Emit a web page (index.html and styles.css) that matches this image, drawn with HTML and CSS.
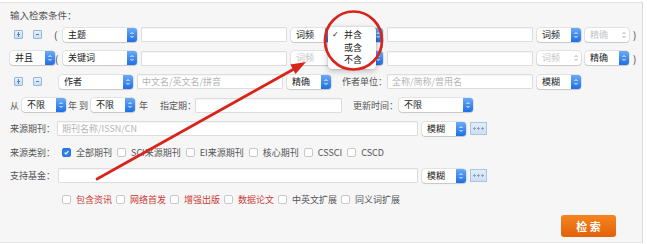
FILE: index.html
```html
<!DOCTYPE html>
<html lang="zh-CN">
<head>
    <meta charset="UTF-8">
    <title>高级检索</title>
    <link rel="stylesheet" href="styles.css">
</head>
<body>
<svg class="defs" width="0" height="0">
    <symbol id="ud" viewBox="0 0 6 10">
        <path d="M1.5 4 L3 2.5 L4.5 4 M1.5 6 L3 7.5 L4.5 6" fill="none" stroke="currentColor" stroke-width="1"/>
    </symbol>
    <symbol id="tick" viewBox="0 0 10 10">
        <path d="M2.3 5.2 L4.2 7.1 L7.8 2.9" fill="none" stroke="#fff" stroke-width="1.6"/>
    </symbol>
</svg>

<div id="search">
    <div class="title">输入检索条件：</div>

    <!-- 第一行条件 -->
    <div class="row">
        <div class="lead">
            <span class="ops"><span class="op add"></span><span class="op"></span></span>
            <span class="paren">(</span>
        </div>
        <span class="sel field"><span class="val">主题</span><span class="arr"><svg><use href="#ud"/></svg></span></span>
        <input class="txt" type="text">
        <span class="sel"><span class="val">词频</span><span class="arr"><svg><use href="#ud"/></svg></span></span>
        <span class="sel"><span class="val">并含</span><span class="arr"><svg><use href="#ud"/></svg></span></span>
        <input class="txt" type="text">
        <span class="sel"><span class="val">词频</span><span class="arr"><svg><use href="#ud"/></svg></span></span>
        <span class="sel off"><span class="val">精确</span><span class="arr"><svg><use href="#ud"/></svg></span></span>
        <span class="paren">)</span>
    </div>

    <!-- 第二行条件 -->
    <div class="row">
        <div class="lead">
            <span class="sel logic"><span class="val">并且</span><span class="arr"><svg><use href="#ud"/></svg></span></span>
            <span class="paren">(</span>
        </div>
        <span class="sel field"><span class="val">关键词</span><span class="arr"><svg><use href="#ud"/></svg></span></span>
        <input class="txt" type="text">
        <span class="sel off"><span class="val">词频</span><span class="arr"><svg><use href="#ud"/></svg></span></span>
        <span class="sel"><span class="val">并含</span><span class="arr"><svg><use href="#ud"/></svg></span></span>
        <input class="txt" type="text">
        <span class="sel off"><span class="val">词频</span><span class="arr"><svg><use href="#ud"/></svg></span></span>
        <span class="sel"><span class="val">精确</span><span class="arr"><svg><use href="#ud"/></svg></span></span>
        <span class="paren">)</span>
    </div>

    <!-- 作者 -->
    <div class="row">
        <div class="lead short">
            <span class="ops"><span class="op add"></span><span class="op"></span></span>
        </div>
        <span class="sel field"><span class="val">作者</span><span class="arr"><svg><use href="#ud"/></svg></span></span>
        <input class="txt" type="text" placeholder="中文名/英文名/拼音">
        <span class="sel"><span class="val">精确</span><span class="arr"><svg><use href="#ud"/></svg></span></span>
        <span class="lbl org">作者单位：</span>
        <input class="txt" type="text" placeholder="全称/简称/曾用名">
        <span class="sel"><span class="val">模糊</span><span class="arr"><svg><use href="#ud"/></svg></span></span>
    </div>

    <!-- 时间 -->
    <div class="row tight">
        <span class="lbl from">从</span>
        <span class="sel"><span class="val">不限</span><span class="arr"><svg><use href="#ud"/></svg></span></span>
        <span class="lbl yr">年 到</span>
        <span class="sel"><span class="val">不限</span><span class="arr"><svg><use href="#ud"/></svg></span></span>
        <span class="lbl yr2">年</span>
        <span class="lbl period">指定期：</span>
        <input class="txt date" type="text">
        <span class="lbl upd">更新时间：</span>
        <span class="sel field"><span class="val">不限</span><span class="arr"><svg><use href="#ud"/></svg></span></span>
    </div>

    <!-- 来源期刊 -->
    <div class="row">
        <span class="lbl src">来源期刊：</span>
        <input class="txt long" type="text" placeholder="期刊名称/ISSN/CN">
        <span class="sel"><span class="val">模糊</span><span class="arr"><svg><use href="#ud"/></svg></span></span>
        <span class="more"><i></i></span>
    </div>

    <!-- 来源类别 -->
    <div class="row">
        <span class="lbl kind">来源类别：</span>
        <label class="chk"><span class="cb on"><svg><use href="#tick"/></svg></span>全部期刊</label>
        <label class="chk"><span class="cb"></span>SCI来源期刊</label>
        <label class="chk"><span class="cb"></span>EI来源期刊</label>
        <label class="chk"><span class="cb"></span>核心期刊</label>
        <label class="chk"><span class="cb"></span>CSSCI</label>
        <label class="chk"><span class="cb"></span>CSCD</label>
    </div>

    <!-- 支持基金 -->
    <div class="row">
        <span class="lbl fund">支持基金：</span>
        <input class="txt long fund-in" type="text">
        <span class="sel"><span class="val">模糊</span><span class="arr"><svg><use href="#ud"/></svg></span></span>
        <span class="more"><i></i></span>
    </div>

    <div class="row extras">
        <label class="chk red"><span class="cb"></span>包含资讯</label>
        <label class="chk red"><span class="cb"></span>网络首发</label>
        <label class="chk red"><span class="cb"></span>增强出版</label>
        <label class="chk red"><span class="cb"></span>数据论文</label>
        <label class="chk"><span class="cb"></span>中英文扩展</label>
        <label class="chk"><span class="cb"></span>同义词扩展</label>
    </div>

    <div class="actions">
        <button class="btn-search" type="button">检 索</button>
    </div>

    <!-- 展开的下拉菜单 -->
    <ul class="menu">
        <li class="on">并含</li>
        <li>或含</li>
        <li>不含</li>
    </ul>
</div>

<!-- 标注 -->
<svg class="mark" width="647" height="244" viewBox="0 0 647 244">
    <ellipse cx="353.5" cy="40.5" rx="28.5" ry="29" fill="none" stroke="#d9241c" stroke-width="2.7"/>
    <line x1="97" y1="179" x2="294" y2="69" stroke="#d9241c" stroke-width="2.7" stroke-linecap="round"/>
    <polygon points="306,62 295.5,74 290.3,64.6" fill="#d9241c"/>
</svg>
</body>
</html>
```

FILE: styles.css
```css
* {
    box-sizing: border-box;
}
body, ul, li {
    margin: 0;
    padding: 0;
}
body {
    background: #fff;
    font-family: "Noto Sans CJK SC", "Noto Sans", sans-serif;
    font-size: 9px;
    color: #555;
    position: relative;
}
.defs {
    position: absolute;
}
#search {
    position: relative;
    margin-top: 2px;
    width: 643px;
    height: 241px;
    padding: 5px 0 0 10px;
    background: #f6f6f7;
    border-top: 1px solid #e3e3e5;
    border-right: 1px solid #dadadc;
    border-bottom: 1px solid #e6e6e8;
}
.title {
    line-height: 14px;
    margin-bottom: 1px;
    font-size: 9.5px;
}
.row {
    display: flex;
    align-items: center;
    gap: 4px;
    height: 23.5px;
}
.row.tight {
    gap: 2px;
}

/* 行首：加减按钮 / 逻辑关系 */
.lead {
    width: 49px;
    display: flex;
    align-items: center;
    justify-content: space-between;
}
.lead.short {
    width: 45px;
}
.ops {
    display: flex;
    gap: 10px;
    padding-left: 4px;
}
.op {
    position: relative;
    width: 9px;
    height: 9px;
    border: 1px solid #93b7de;
    border-radius: 1px;
    background: linear-gradient(#e8f1fa, #cbddf1);
}
.op::before {
    content: "";
    position: absolute;
    left: 2px;
    right: 2px;
    top: 3px;
    height: 1px;
    background: #4f83c0;
}
.op.add::after {
    content: "";
    position: absolute;
    top: 1px;
    bottom: 1px;
    left: 3px;
    width: 1px;
    background: #4f83c0;
}
.paren {
    font-size: 10px;
    color: #444;
    width: 5px;
}

/* 下拉框 */
.sel {
    display: flex;
    flex: none;
    width: 44px;
    height: 14px;
    background: #fff;
    border-radius: 3px;
    box-shadow: 0 0 0 0.5px rgba(0, 0, 0, .16), 0 1px 1px rgba(0, 0, 0, .12);
    color: #222;
}
.sel .val {
    flex: 1;
    padding-left: 5px;
    line-height: 14px;
}
.sel .arr {
    width: 10px;
    display: flex;
    align-items: center;
    justify-content: center;
    border-radius: 0 3px 3px 0;
    background: linear-gradient(#69abf7, #1f6ee5);
    color: #fff;
}
.sel .arr svg {
    width: 6px;
    height: 10px;
}
.sel.off {
    color: #c6c6c6;
}
.sel.off .arr {
    background: none;
    color: #a9a9a9;
}
.sel.field {
    width: 74px;
}
.sel.logic {
    width: 45px;
}

/* 输入框 */
.txt {
    flex: none;
    width: 146px;
    height: 15px;
    margin: 0;
    padding: 0 0 0 4px;
    background: #fff;
    border: 1px solid #dddddf;
    border-radius: 1px;
    box-shadow: inset 0 1px 1px rgba(0, 0, 0, .04);
    font-family: inherit;
    font-size: 9px;
    outline: none;
}
.txt::placeholder {
    color: #b4b4b4;
}
.txt.date {
    width: 147px;
}
.txt.long {
    width: 361px;
}
.txt.fund-in {
    width: 360px;
}

/* 文字标签 */
.lbl {
    flex: none;
    white-space: nowrap;
}
.org {
    width: 41px;
    margin-left: 7px;
}
.from {
    width: 10px;
}
.yr {
    width: 21px;
}
.yr2 {
    width: 21px;
    padding-left: 2px;
}
.period {
    width: 33px;
}
.upd {
    width: 44px;
    margin-left: 9px;
}
.src {
    width: 43px;
}
.kind {
    width: 48px;
}
.fund {
    width: 44px;
}

/* “…” 选择按钮 */
.more {
    display: flex;
    align-items: center;
    justify-content: center;
    width: 17px;
    height: 13px;
    border: 1px solid #aac5e3;
    background: linear-gradient(#e2edf8, #cddff2);
}
.more i {
    width: 11px;
    height: 3px;
    background: radial-gradient(circle at 1.5px 1.5px, #8aa4c2 1px, transparent 1.3px) 0 0 / 4px 3px repeat-x;
}

/* 复选框 */
.chk {
    display: flex;
    align-items: center;
    gap: 5px;
    margin-right: 1px;
    white-space: nowrap;
}
.cb {
    width: 9px;
    height: 9px;
    background: #fff;
    border: 1px solid #c8c8ca;
    border-radius: 2px;
}
.cb.on {
    background: #2f7fee;
    border-color: #2a6fd3;
}
.cb svg {
    display: block;
    width: 7px;
    height: 7px;
}
.extras {
    padding-left: 52px;
    gap: 4px;
}
.extras .chk {
    margin-right: 0;
}
.chk.red {
    color: #cc3a33;
}

.actions {
    display: flex;
    justify-content: flex-end;
    padding: 4px 26px 0 0;
}
.btn-search {
    width: 55px;
    height: 22px;
    border: none;
    border-radius: 3px;
    background: linear-gradient(#f5841f, #e2620a);
    color: #fff;
    font-family: inherit;
    font-size: 11px;
    font-weight: bold;
}

/* 下拉菜单 */
.menu {
    position: absolute;
    left: 328px;
    top: 24px;
    width: 48px;
    padding: 2px 0;
    background: #fff;
    border-radius: 4px;
    box-shadow: 0 2px 6px rgba(0, 0, 0, .25), 0 0 0 0.5px rgba(0, 0, 0, .1);
}
.menu li {
    list-style: none;
    position: relative;
    height: 12.5px;
    line-height: 12.5px;
    padding-left: 16px;
    color: #222;
}
.menu li.on::before {
    content: "✓";
    position: absolute;
    left: 4px;
    font-family: "DejaVu Sans", sans-serif;
    font-size: 8px;
}

.mark {
    position: absolute;
    left: 0;
    top: 0;
    pointer-events: none;
}
```
